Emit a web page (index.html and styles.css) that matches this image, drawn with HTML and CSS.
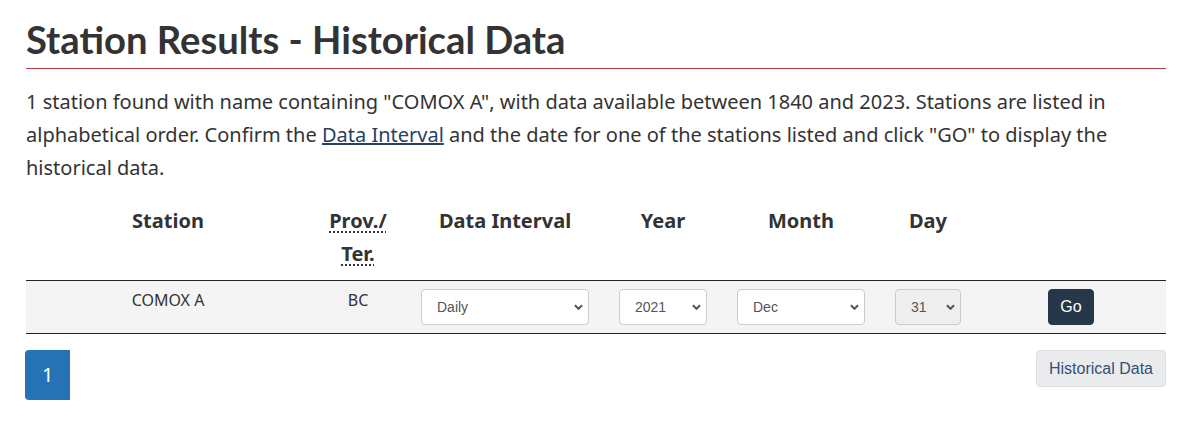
FILE: index.html
```html
<!DOCTYPE html>
<html lang="en">
<head>
<meta charset="utf-8">
<title>Station Results - Historical Data</title>
<link rel="stylesheet" href="styles.css">
</head>
<body>
<main class="container">
  <h1 class="page-title">Station Results - Historical Data</h1>
  <p class="intro">1 station found with name containing "COMOX A", with data available between 1840 and 2023. Stations are listed in alphabetical order. Confirm the <a href="#" class="link">Data Interval</a> and the date for one of the stations listed and click "GO" to display the historical data.</p>
  <table class="results">
    <colgroup>
      <col class="c-station"><col class="c-prov"><col class="c-interval"><col class="c-year"><col class="c-month"><col class="c-day"><col class="c-go">
    </colgroup>
    <thead>
      <tr>
        <th>Station</th>
        <th><abbr title="Province/Territory">Prov./</abbr> <abbr title="Province/Territory">Ter.</abbr></th>
        <th>Data Interval</th>
        <th>Year</th>
        <th>Month</th>
        <th>Day</th>
        <th></th>
      </tr>
    </thead>
    <tbody>
      <tr>
        <td>COMOX A</td>
        <td>BC</td>
        <td><div class="select-wrap"><select class="form-select"><option>Daily</option></select><svg class="chev" viewBox="0 0 10 6" width="9" height="6"><polyline points="1,1 5,5 9,1" fill="none" stroke="#555" stroke-width="2.2"/></svg></div></td>
        <td><div class="select-wrap"><select class="form-select"><option>2021</option></select><svg class="chev" viewBox="0 0 10 6" width="9" height="6"><polyline points="1,1 5,5 9,1" fill="none" stroke="#555" stroke-width="2.2"/></svg></div></td>
        <td><div class="select-wrap"><select class="form-select"><option>Dec</option></select><svg class="chev" viewBox="0 0 10 6" width="9" height="6"><polyline points="1,1 5,5 9,1" fill="none" stroke="#555" stroke-width="2.2"/></svg></div></td>
        <td><div class="select-wrap"><select class="form-select is-disabled" disabled><option>31</option></select><svg class="chev" viewBox="0 0 10 6" width="9" height="6"><polyline points="1,1 5,5 9,1" fill="none" stroke="#555" stroke-width="2.2"/></svg></div></td>
        <td><button class="btn-go" type="button">Go</button></td>
      </tr>
    </tbody>
  </table>
  <div class="bottom-row">
    <ul class="pagination"><li><a href="#" class="page-active">1</a></li></ul>
    <button class="btn-default" type="button">Historical Data</button>
  </div>
</main>
</body>
</html>
```
FILE: styles.css
```css
html, body {
  margin: 0;
  padding: 0;
  background: #fff;
}
body {
  font-family: "Noto Sans", sans-serif;
  font-size: 20px;
  line-height: 33px;
  color: #333;
}
.container {
  width: 1140px;
  padding: 19px 0 0 26px;
}
.page-title {
  font-family: "Lato", sans-serif;
  font-weight: 700;
  font-size: 38.2px;
  line-height: 41px;
  color: #333;
  margin: 0 0 16px;
  padding-bottom: 8px;
  border-bottom: 1px solid #af3c43;
}
.intro {
  margin: 0 0 12px;
}
.link {
  color: #284162;
  text-decoration: underline;
}
.results {
  width: 1140px;
  border-collapse: collapse;
  table-layout: fixed;
}
.c-station { width: 284px; }
.c-prov { width: 96px; }
.c-interval { width: 198px; }
.c-year { width: 118px; }
.c-month { width: 158px; }
.c-day { width: 96px; }
.c-go { width: 190px; }
.results th {
  font-weight: 700;
  text-align: center;
  vertical-align: top;
  padding: 8px 16px 10px;
  border-bottom: 1px solid #222;
}
.results th abbr {
  text-decoration: underline dotted;
  text-underline-offset: 3px;
  cursor: help;
}
.results td {
  background: #f4f4f4;
  font-size: 16px;
  line-height: 23px;
  text-align: center;
  vertical-align: top;
  padding: 8px 15px;
  border-bottom: 1px solid #222;
}
.select-wrap {
  position: relative;
}
.form-select {
  display: block;
  width: 100%;
  height: 36px;
  box-sizing: border-box;
  appearance: none;
  -webkit-appearance: none;
  background: #fff;
  border: 1px solid #ccc;
  border-radius: 4px;
  padding: 0 20px 0 15px;
  font-family: "Liberation Sans", Arial, sans-serif;
  font-size: 14px;
  color: #555;
  text-align: left;
}
.form-select.is-disabled {
  background: #eee;
  opacity: 1;
  color: #555;
}
.chev {
  position: absolute;
  right: 6px;
  top: 15px;
  pointer-events: none;
}
.btn-go {
  background: #26374a;
  color: #fff;
  border: 1px solid #26374a;
  border-radius: 4px;
  padding: 7px 11px;
  font-family: "Liberation Sans", Arial, sans-serif;
  font-size: 16px;
  line-height: 20px;
}
.bottom-row {
  display: flex;
  justify-content: space-between;
  align-items: flex-start;
  margin-top: 16px;
}
.pagination {
  list-style: none;
  margin: 0 0 0 -1px;
  padding: 0;
  display: flex;
}
.page-active {
  display: block;
  background: #2572b4;
  color: #fff;
  text-decoration: none;
  padding: 13px 17px;
  font-size: 20px;
  line-height: 24px;
  border-radius: 4px 0 0 4px;
}
.btn-default {
  background: #eaebed;
  border: 1px solid #dcdee1;
  border-radius: 4px;
  color: #335075;
  font-family: "Liberation Sans", Arial, sans-serif;
  font-size: 16px;
  line-height: 19px;
  padding: 8px 12px;
}
```
